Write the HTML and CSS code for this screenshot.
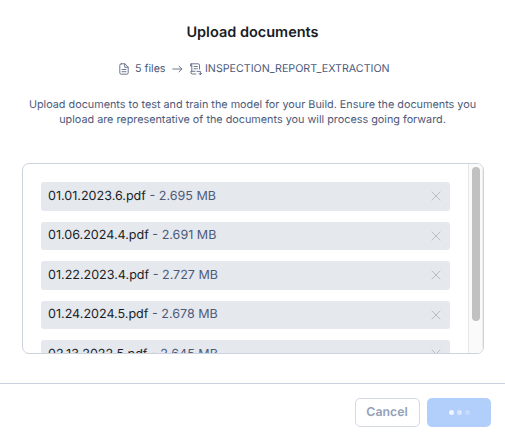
FILE: index.html
```html
<!DOCTYPE html>
<html lang="en">
<head>
<meta charset="utf-8">
<title>Upload documents</title>
<link rel="stylesheet" href="styles.css">
</head>
<body>
<main class="dialog">
  <h1 class="title">Upload documents</h1>
  <div class="route">
    <svg class="icon-file" width="10" height="12" viewBox="0 0 10 12"><path d="M2.3.8H5.9L9.2 4.1V9.8Q9.2 11.2 7.8 11.2H2.2Q.8 11.2.8 9.8V2.2Q.8.8 2.3.8ZM5.7.9V4.3H9.1M3 6.5H7M3 8.7H7"/></svg>
    <span class="count">5 files</span>
    <svg class="icon-arrow" width="11" height="8" viewBox="0 0 11 8"><path d="M.8 4H9.8M7 1.2 9.9 4 7 6.8"/></svg>
    <svg class="icon-build" width="12" height="13" viewBox="0 0 12 13"><path d="M1.8 8.2V2.2Q1.8.8.9.8 .5 1 .5 2V3H1.6M1 .8H8.2Q9.5.8 9.5 2.2V6M4 3.5H7.4M4 5.8H7.4M5 8.3H.9Q.6 11 2.2 11H5.8M7 8.4H10.4V11.6M9 10.4 10.4 11.9 11.6 10.4"/></svg>
    <span class="name">INSPECTION_REPORT_EXTRACTION</span>
  </div>
  <p class="description">Upload documents to test and train the model for your Build. Ensure the documents you<br>upload are representative of the documents you will process going forward.</p>
  <section class="file-box">
    <ul class="files">
      <li class="file"><span class="label">01.01.2023.6.pdf <span class="size">- 2.695 MB</span></span><svg class="remove" width="10" height="10" viewBox="0 0 10 10"><path d="M1 1 9 9M9 1 1 9"/></svg></li>
      <li class="file"><span class="label">01.06.2024.4.pdf <span class="size">- 2.691 MB</span></span><svg class="remove" width="10" height="10" viewBox="0 0 10 10"><path d="M1 1 9 9M9 1 1 9"/></svg></li>
      <li class="file"><span class="label">01.22.2023.4.pdf <span class="size">- 2.727 MB</span></span><svg class="remove" width="10" height="10" viewBox="0 0 10 10"><path d="M1 1 9 9M9 1 1 9"/></svg></li>
      <li class="file"><span class="label">01.24.2024.5.pdf <span class="size">- 2.678 MB</span></span><svg class="remove" width="10" height="10" viewBox="0 0 10 10"><path d="M1 1 9 9M9 1 1 9"/></svg></li>
      <li class="file"><span class="label">02.13.2022.5.pdf <span class="size">- 2.645 MB</span></span><svg class="remove" width="10" height="10" viewBox="0 0 10 10"><path d="M1 1 9 9M9 1 1 9"/></svg></li>
    </ul>
    <div class="track"><div class="thumb"></div></div>
  </section>
  <footer class="actions">
    <button class="button cancel">Cancel</button>
    <button class="button submit" aria-label="Uploading"><i class="dot"></i><i class="dot second"></i><i class="dot third"></i></button>
  </footer>
</main>
</body>
</html>
```
FILE: styles.css
```css
* { box-sizing: border-box; }
body {
  margin: 0;
  background: #fff;
  font-family: Inter, sans-serif;
  color: #4c5a7a;
  text-rendering: geometricPrecision;
}
.dialog {
  display: flex;
  flex-direction: column;
  width: 505px;
  height: 433px;
  overflow: hidden;
}
.title {
  margin: 23px 0 0;
  line-height: 20px;
  font-size: 14.5px;
  font-weight: 600;
  text-align: center;
  color: #171d26;
}
.route {
  display: flex;
  align-items: center;
  height: 16px;
  margin: 18px 0 0 119px;
  font-size: 10.7px;
  line-height: 16px;
  white-space: nowrap;
}
.route svg, .remove {
  flex: none;
  fill: none;
  stroke: #5e6983;
  stroke-width: 1;
  stroke-linecap: round;
  stroke-linejoin: round;
}
.route svg { stroke-width: .9; }
.count { width: 31px; margin-left: 6px; }
.icon-arrow { margin-left: 6px; }
.icon-build { margin-left: 7px; }
.name { margin-left: 3px; }
.description {
  margin: 20px 0 0;
  font-size: 10.82px;
  line-height: 15px;
  text-align: center;
  white-space: nowrap;
}
.file-box {
  display: flex;
  flex: none;
  width: 462px;
  height: 191px;
  margin: 36px 0 0 22px;
  border: 1px solid #cdd2df;
  border-radius: 7px;
  overflow: hidden;
}
.files {
  display: flex;
  flex-direction: column;
  flex: 1;
  gap: 11px;
  margin: 0;
  padding: 18px 18px 0;
  list-style: none;
}
.file {
  display: flex;
  flex: none;
  align-items: center;
  justify-content: space-between;
  height: 28.5px;
  padding: 0 9px 0 7px;
  border-radius: 3px;
  background: #e5e8ed;
  color: #171d26;
  font-size: 12.55px;
  line-height: 20px;
}
.label { padding-top: 1.4px; }
.size { color: #4c5a7a; }
.remove { stroke: #b9bec7; }
.track {
  width: 15px;
  padding: 3px 0 0 3px;
  border-left: 1px solid #e7e7e7;
  border-right: 1px solid #ededed;
  background: #fafafa;
}
.thumb {
  width: 8px;
  height: 154px;
  border-radius: 4px;
  background: #c1c1c1;
}
.actions {
  display: flex;
  flex: none;
  justify-content: flex-end;
  gap: 7px;
  height: 50px;
  margin-top: 29px;
  padding: 14px 14px 0 0;
  border-top: 1px solid #cad0de;
}
.button {
  display: flex;
  align-items: center;
  justify-content: center;
  height: 29px;
  padding: 0;
  border: 0;
  border-radius: 5px;
  font: 600 12.3px/18px Inter, sans-serif;
  text-rendering: geometricPrecision;
}
.cancel {
  width: 65px;
  padding: 0 1px 2px 0;
  border: 1px solid #d5d9e3;
  background: #fff;
  color: #94a0b7;
}
.submit { width: 64px; gap: 3px; background: #b2cffb; }
.dot { width: 5px; height: 5px; border-radius: 50%; background: #f0f5fe; }
.second { background: #d8e6fd; }
.third { background: #c6dbfc; }
```
